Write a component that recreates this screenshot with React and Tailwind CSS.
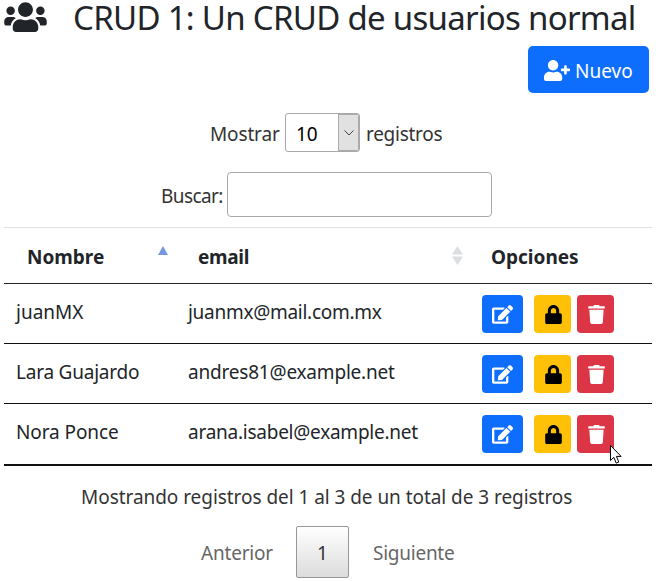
import { FaEdit, FaLock, FaTrash, FaUserPlus, FaUsers } from "react-icons/fa";

const users = [
  { name: "juanMX", nameClass: "", email: "juanmx@mail.com.mx", emailClass: "tracking-[-0.280px]" },
  { name: "Lara Guajardo", nameClass: "tracking-[-0.220px]", email: "andres81@example.net", emailClass: "tracking-[-0.200px]" },
  { name: "Nora Ponce", nameClass: "tracking-[-0.100px]", email: "arana.isabel@example.net", emailClass: "tracking-[-0.250px]" },
];

function Row({ user, last }) {
  return (
    <div className={last ? "flex h-[62px] border-b-2 border-[#111]" : "flex h-[60px] border-b border-[#111]"}>
      <div className="w-[171px] shrink-0 pl-[12px] pt-[13px]">
        <span className={user.nameClass}>{user.name}</span>
      </div>
      <div className="w-[307px] shrink-0 pl-[13px] pt-[13px]">
        <span className={user.emailClass}>{user.email}</span>
      </div>
      <div className="flex pt-[11px]">
        <button className="mr-[11px] flex h-[38px] w-[41px] items-center justify-center rounded-[4px] bg-[#0d6efd]">
          <FaEdit className="h-[19px] w-[21px] text-white" />
        </button>
        <button className="mr-[6px] flex h-[38px] w-[37px] items-center justify-center rounded-[4px] bg-[#ffc107]">
          <FaLock className="ml-[2px] h-[19px] w-[17px] text-black" />
        </button>
        <button className="flex h-[38px] w-[37px] items-center justify-center rounded-[4px] bg-[#dc3545]">
          <FaTrash className="ml-px h-[19px] w-[17px] text-white" />
        </button>
      </div>
    </div>
  );
}

export default function App() {
  return (
    <div className="relative h-[581px] w-[656px] overflow-hidden whitespace-nowrap bg-white font-['Noto_Sans',sans-serif] text-[19px] leading-[30px] text-[#212529]">
      <header className="flex h-[46px]">
        <FaUsers className="ml-1 h-[34px] w-[43px] shrink-0" />
        <h1 className="ml-[26px] text-[33px] leading-[35px] tracking-[-0.710px]">CRUD 1: Un CRUD de usuarios normal</h1>
      </header>
      <div className="flex h-[67px] justify-end pr-[7px]">
        <button className="flex h-[47px] w-[121px] items-center rounded-[5px] bg-[#0d6efd] pl-4 text-white">
          <FaUserPlus className="mr-[5px] mt-px h-[21px] w-[26px] shrink-0" />
          <span className="mt-[3px]">Nuevo</span>
        </button>
      </div>

      <div className="flex h-[59px] pl-[210px] text-[#333]">
        <span className="w-[75px] shrink-0 pt-[6px] tracking-[-0.150px]">Mostrar</span>
        <div className="flex h-[39px] w-[75px] shrink-0 overflow-hidden rounded-[3px] border border-[#aaa]">
          <span className="w-[52px] pl-[10px] pt-[5px] text-black">10</span>
          <span className="flex grow items-center justify-center border border-[#aaa] bg-[#e1e1e1]">
            <svg viewBox="0 0 10 6" className="h-[6px] w-[10px]"><path d="M.5.5L5 5 9.500.5" fill="none" stroke="#444" /></svg>
          </span>
        </div>
        <span className="ml-[6px] pt-[6px] tracking-[-0.280px]">registros</span>
      </div>
      <div className="flex h-[55px] pl-[161px] text-[#333]">
        <span className="w-[66px] shrink-0 pt-[9px] tracking-[-0.600px]">Buscar:</span>
        <input className="h-[45px] w-[265px] rounded-[4px] border border-[#aaa]" />
      </div>

      <div className="ml-1 w-[648px] border-t border-[#dee2e6]">
        <div className="flex h-[56px] border-b border-[#212529] font-bold">
          <div className="flex w-[171px] shrink-0 pl-[23px] pt-[14px]">
            <span className="w-[131px]">Nombre</span>
            <svg viewBox="0 0 10 9" className="mt-[4px] h-[9px] w-[10px]"><path d="M0 9L5 0l5 9z" fill="#7796dd" /></svg>
          </div>
          <div className="flex w-[307px] shrink-0 pl-[23px] pt-[14px]">
            <span className="w-[254px] tracking-[-0.300px]">email</span>
            <svg viewBox="0 0 11 19" className="mt-[4px] h-[19px] w-[11px]"><path d="M0 8.500L5.500 0 11 8.500zM0 10.500h11L5.500 19z" fill="#dcdfe2" /></svg>
          </div>
          <div className="pl-[9px] pt-[14px]">Opciones</div>
        </div>
        {users.map((user, i) => <Row key={user.email} user={user} last={i === users.length - 1} />)}
      </div>

      <div className="pl-[81px] pt-[16px] tracking-[-0.050px] text-[#333]">Mostrando registros del 1 al 3 de un total de 3 registros</div>
      <nav className="flex h-[52px] pt-[14px] text-[#666]">
        <span className="w-[296px] shrink-0 pl-[201px] pt-[12px] tracking-[-0.200px]">Anterior</span>
        <button className="h-[52px] w-[53px] shrink-0 rounded-[2px] border border-[#979797] bg-linear-to-b from-white to-[#dcdcdc] pt-[2px] text-[#333]">1</button>
        <span className="ml-[24px] pt-[12px] tracking-[-0.250px]">Siguiente</span>
      </nav>

      <svg viewBox="0 0 12 19" className="absolute left-[610px] top-[445px] h-[19px] w-3">
        <path d="M.5.5v15l3.300-3.200 2.400 5.800 2.600-1.100-2.400-5.600h4.700z" fill="white" stroke="black" />
      </svg>
    </div>
  );
}
